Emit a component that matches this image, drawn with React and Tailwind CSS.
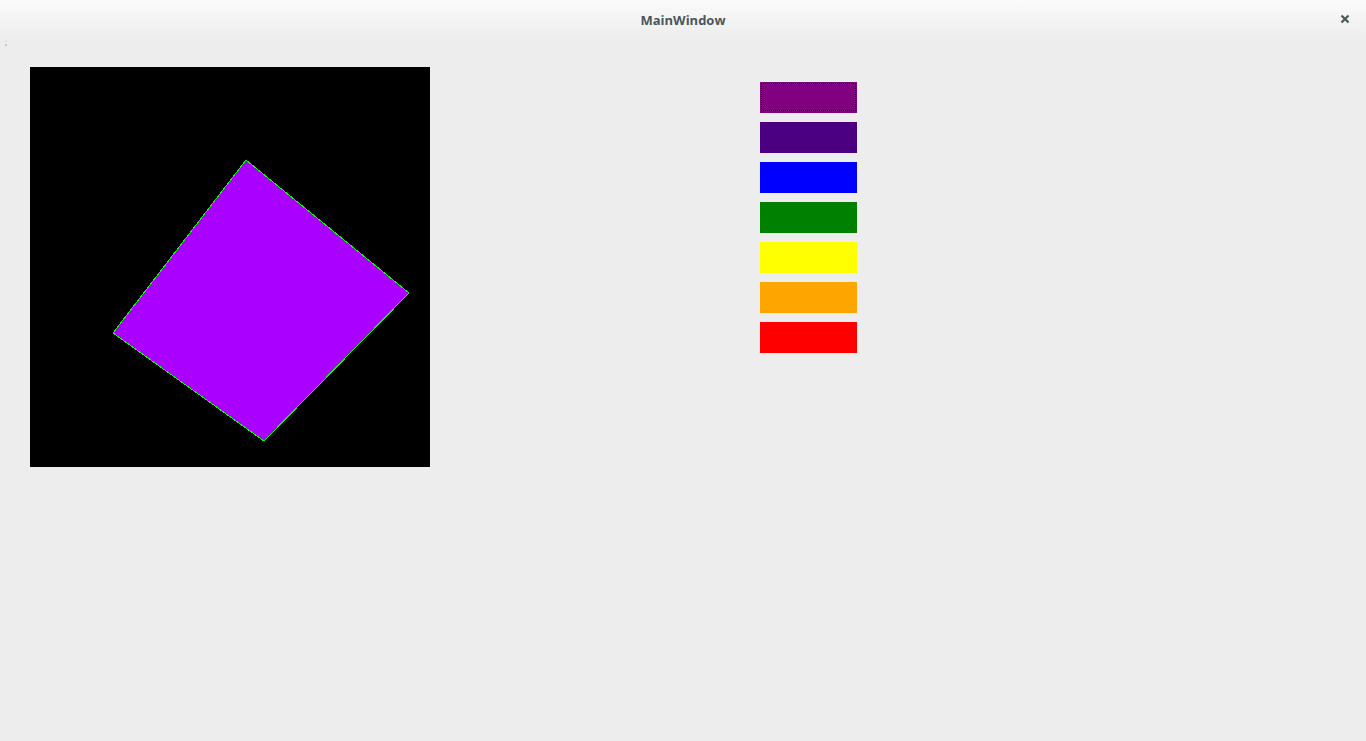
import React from 'react'

const colors = ['#800080', '#4b0082', '#0000ff', '#008000', '#ffff00', '#ffa500', '#ff0000']

function Canvas() {
  return (
    <svg width="400" height="400" viewBox="0 0 400 400" className="block bg-black shrink-0">
      <polygon
        points="216,93 379,226 234,374 83,266"
        fill="#aa00ff"
        stroke="#00ff00"
        strokeWidth="1"
        shapeRendering="crispEdges"
      />
    </svg>
  )
}

function ColorButton({ color, focused }) {
  return (
    <button
      className="relative w-[97px] h-[31px] block"
      style={{ backgroundColor: color }}
    >
      {focused && <span className="absolute inset-x-[1px] top-[1px] bottom-[2px] border border-dotted border-black" />}
    </button>
  )
}

export default function App() {
  return (
    <div className="w-[1366px] h-[741px] bg-[#ededed] flex flex-col overflow-hidden" style={{ fontFamily: '"Open Sans", sans-serif' }}>
      <div className="h-[38px] shrink-0 bg-gradient-to-b from-[#fbfbfb] to-[#ededed] flex items-center relative">
        <span className="flex-1 text-center text-[13px] font-bold text-[#4b5659] pt-[3px]">MainWindow</span>
        <span className="absolute right-[16px] top-[14px]">
          <svg width="10" height="10" viewBox="0 0 10 10">
            <path d="M1.5 1.5 L8.5 8.5 M8.5 1.5 L1.5 8.5" stroke="#4b5659" strokeWidth="2.2" />
          </svg>
        </span>
      </div>
      <div className="relative flex-1">
        <span className="absolute left-[5px] top-[3px] w-[2px] h-[1px] bg-[#d8d8d8]" />
        <span className="absolute left-[5px] top-[6px] w-[2px] h-[2px] bg-[#c8c8c8]" />
        <div className="flex pl-[30px] pt-[29px]">
          <Canvas />
          <div className="ml-[330px] mt-[15px] flex flex-col gap-[9px]">
            {colors.map((c, i) => (
              <ColorButton key={c} color={c} focused={i === 0} />
            ))}
          </div>
        </div>
      </div>
    </div>
  )
}
